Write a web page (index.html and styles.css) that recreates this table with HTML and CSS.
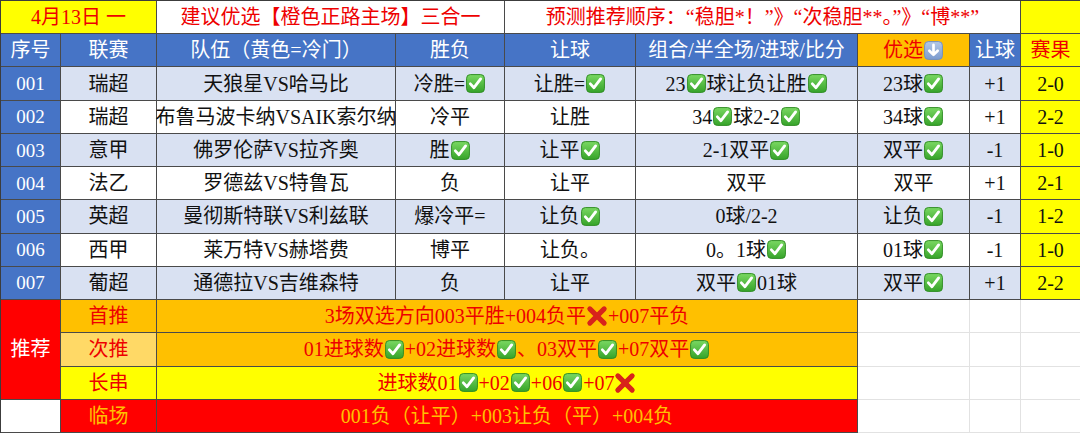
FILE: index.html
```html
<!DOCTYPE html>
<html lang="zh">
<head>
<meta charset="utf-8">
<title>4月13日 推荐</title>
<link rel="stylesheet" href="styles.css">
</head>
<body>
<div class="sheet">
  <!-- title row -->
  <div class="c y tr span2">4月13日 一</div>
  <div class="c w tr span2">建议优选【橙色正路主场】三合一</div>
  <div class="c w tr span4">预测推荐顺序：“稳胆*！”》“次稳胆**。”》“博**”</div>
  <div class="c y"></div>

  <!-- header -->
  <div class="c blue tw">序号</div>
  <div class="c blue tw">联赛</div>
  <div class="c blue tw">队伍（黄色=冷门）</div>
  <div class="c blue tw">胜负</div>
  <div class="c blue tw">让球</div>
  <div class="c blue tw">组合/半全场/进球/比分</div>
  <div class="c o tr">优选<svg class="ic"><use href="#dn"/></svg></div>
  <div class="c blue tw">让球</div>
  <div class="c y tr">赛果</div>

  <!-- 001 -->
  <div class="c blue tw num">001</div>
  <div class="c lb">瑞超</div>
  <div class="c lb">天狼星VS哈马比</div>
  <div class="c lb">冷胜=<svg class="ic"><use href="#ok"/></svg></div>
  <div class="c lb">让胜=<svg class="ic"><use href="#ok"/></svg></div>
  <div class="c lb">23<svg class="ic"><use href="#ok"/></svg>球让负让胜<svg class="ic"><use href="#ok"/></svg></div>
  <div class="c lb">23球<svg class="ic"><use href="#ok"/></svg></div>
  <div class="c lb">+1</div>
  <div class="c y">2-0</div>

  <!-- 002 -->
  <div class="c blue tw num">002</div>
  <div class="c w">瑞超</div>
  <div class="c w">布鲁马波卡纳VSAIK索尔纳</div>
  <div class="c w">冷平</div>
  <div class="c w">让胜</div>
  <div class="c w">34<svg class="ic"><use href="#ok"/></svg>球2-2<svg class="ic"><use href="#ok"/></svg></div>
  <div class="c w">34球<svg class="ic"><use href="#ok"/></svg></div>
  <div class="c w">+1</div>
  <div class="c y">2-2</div>

  <!-- 003 -->
  <div class="c blue tw num">003</div>
  <div class="c lb">意甲</div>
  <div class="c lb">佛罗伦萨VS拉齐奥</div>
  <div class="c lb">胜<svg class="ic"><use href="#ok"/></svg></div>
  <div class="c lb">让平<svg class="ic"><use href="#ok"/></svg></div>
  <div class="c lb">2-1双平<svg class="ic"><use href="#ok"/></svg></div>
  <div class="c lb">双平<svg class="ic"><use href="#ok"/></svg></div>
  <div class="c lb">-1</div>
  <div class="c y">1-0</div>

  <!-- 004 -->
  <div class="c blue tw num">004</div>
  <div class="c w">法乙</div>
  <div class="c w">罗德兹VS特鲁瓦</div>
  <div class="c w">负</div>
  <div class="c w">让平</div>
  <div class="c w">双平</div>
  <div class="c w">双平</div>
  <div class="c w">+1</div>
  <div class="c y">2-1</div>

  <!-- 005 -->
  <div class="c blue tw num">005</div>
  <div class="c lb">英超</div>
  <div class="c lb">曼彻斯特联VS利兹联</div>
  <div class="c lb">爆冷平=</div>
  <div class="c lb">让负<svg class="ic"><use href="#ok"/></svg></div>
  <div class="c lb">0球/2-2</div>
  <div class="c lb">让负<svg class="ic"><use href="#ok"/></svg></div>
  <div class="c lb">-1</div>
  <div class="c y">1-2</div>

  <!-- 006 -->
  <div class="c blue tw num">006</div>
  <div class="c w">西甲</div>
  <div class="c w">莱万特VS赫塔费</div>
  <div class="c w">博平</div>
  <div class="c w">让负。</div>
  <div class="c w">0。1球<svg class="ic"><use href="#ok"/></svg></div>
  <div class="c w">01球<svg class="ic"><use href="#ok"/></svg></div>
  <div class="c w">-1</div>
  <div class="c y">1-0</div>

  <!-- 007 -->
  <div class="c blue tw num">007</div>
  <div class="c lb">葡超</div>
  <div class="c lb">通德拉VS吉维森特</div>
  <div class="c lb">负</div>
  <div class="c lb">让平</div>
  <div class="c lb">双平<svg class="ic"><use href="#ok"/></svg>01球</div>
  <div class="c lb">双平<svg class="ic"><use href="#ok"/></svg></div>
  <div class="c lb">+1</div>
  <div class="c y">2-2</div>

  <!-- recommendations -->
  <div class="c r tw rec">推荐</div>
  <div class="c o tr">首推</div>
  <div class="c o tr span4">3场双选方向003平胜+004负平<svg class="ic x"><use href="#no"/></svg>+007平负</div>
  <div class="c blank"></div>
  <div class="c blank"></div>
  <div class="c blank"></div>

  <div class="c o2 tr">次推</div>
  <div class="c o tr span4">01进球数<svg class="ic"><use href="#ok"/></svg>+02进球数<svg class="ic"><use href="#ok"/></svg>、03双平<svg class="ic"><use href="#ok"/></svg>+07双平<svg class="ic"><use href="#ok"/></svg></div>
  <div class="c blank"></div>
  <div class="c blank"></div>
  <div class="c blank"></div>

  <div class="c y tr">长串</div>
  <div class="c y tr span4">进球数01<svg class="ic"><use href="#ok"/></svg>+02<svg class="ic"><use href="#ok"/></svg>+06<svg class="ic"><use href="#ok"/></svg>+07<svg class="ic x"><use href="#no"/></svg></div>
  <div class="c blank"></div>
  <div class="c blank"></div>
  <div class="c blank"></div>

  <div class="c w"></div>
  <div class="c r tg">临场</div>
  <div class="c r tg span4">001负（让平）+003让负（平）+004负</div>
  <div class="c blank"></div>
  <div class="c blank"></div>
  <div class="c blank"></div>
</div>

<svg class="defs" aria-hidden="true">
  <defs>
    <linearGradient id="gok" x1="0" y1="0" x2="0" y2="1">
      <stop offset="0" stop-color="#7ad862"/>
      <stop offset="1" stop-color="#36a32a"/>
    </linearGradient>
    <linearGradient id="gdn" x1="0" y1="0" x2="0" y2="1">
      <stop offset="0" stop-color="#b3c8e6"/>
      <stop offset="1" stop-color="#7b9bcf"/>
    </linearGradient>
    <symbol id="ok" viewBox="0 0 20 20">
      <rect x="0.6" y="0.6" width="18.8" height="18.8" rx="4" fill="url(#gok)" stroke="#2f8c24" stroke-width="1"/>
      <path d="M4.6 10.4 L8.4 14.4 L15.4 5.2" fill="none" stroke="#fff" stroke-width="3" stroke-linecap="round" stroke-linejoin="round"/>
    </symbol>
    <symbol id="dn" viewBox="0 0 20 20">
      <rect x="0.6" y="0.6" width="18.8" height="18.8" rx="4" fill="url(#gdn)" stroke="#6f8fc2" stroke-width="1"/>
      <path d="M10 4 V14.5 M5.6 10.2 L10 14.6 L14.4 10.2" fill="none" stroke="#fff" stroke-width="2.8" stroke-linecap="round" stroke-linejoin="round"/>
    </symbol>
    <symbol id="no" viewBox="0 0 20 20">
      <path d="M3.5 3.5 L16.5 16.5 M16.5 3.5 L3.5 16.5" fill="none" stroke="#d8231b" stroke-width="4.6" stroke-linecap="round"/>
    </symbol>
  </defs>
</svg>
</body>
</html>
```
FILE: styles.css
```css
html, body {
  margin: 0;
  padding: 0;
  background: #ffffff;
}

body {
  font-family: "Liberation Serif", "Noto Sans CJK SC", serif;
  font-size: 20px;
  color: #111111;
}

.sheet {
  display: grid;
  grid-template-columns: 60px 96px 239px 109px 131px 222px 112px 51px 60px;
  grid-template-rows: repeat(13, 1fr);
  width: 1080px;
  height: 433px;
  border-top: 1px solid #3c3c3c;
  border-left: 1px solid #3c3c3c;
  box-sizing: border-box;
}

.c {
  display: flex;
  align-items: center;
  justify-content: center;
  box-sizing: border-box;
  border-right: 1px solid #4a4a4a;
  border-bottom: 1px solid #4a4a4a;
  white-space: nowrap;
  line-height: 1;
  min-width: 0;
}

.span2 { grid-column: span 2; }
.span4 { grid-column: span 4; }
.rec { grid-row: span 3; }

.num { font-size: 19px; }

/* backgrounds */
.blue { background: #4674c6; }
.lb { background: #d9e1f2; }
.w { background: #ffffff; }
.y { background: #ffff00; }
.o { background: #ffc000; }
.o2 { background: #ffd966; }
.r { background: #ff0000; }

.blank {
  background: #ffffff;
  border-right-color: #e2e2e2;
  border-bottom-color: #e2e2e2;
}

/* text colours */
.tr { color: #ee0000; }
.tw { color: #ffffff; }
.tg { color: #ffc000; }

/* icons */
.ic {
  width: 19px;
  height: 19px;
  flex: none;
  margin: 0 1px;
}

.ic.x {
  width: 22px;
  height: 22px;
  margin: 0;
}

.defs {
  display: block;
  width: 0;
  height: 0;
  overflow: hidden;
}
```
